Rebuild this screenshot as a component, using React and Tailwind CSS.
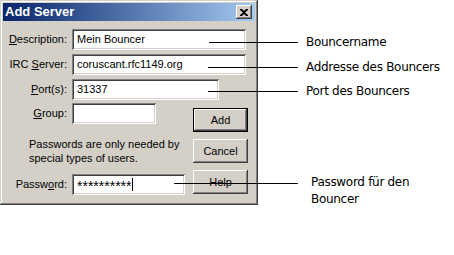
import React from "react";

const sunken =
  "bg-white shadow-[inset_1px_1px_#808080,inset_-1px_-1px_#ffffff,inset_2px_2px_#404040,inset_-2px_-2px_#d4d0c8]";
const raised =
  "bg-[#d4d0c8] shadow-[inset_-1px_-1px_#404040,inset_1px_1px_#ffffff,inset_-2px_-2px_#808080,inset_2px_2px_#d4d0c8]";
const defaultBtn =
  "bg-[#d4d0c8] shadow-[inset_0_0_0_1px_#000000,inset_-2px_-2px_#404040,inset_2px_2px_#ffffff,inset_-3px_-3px_#808080]";

function Field({ label, accessIndex, value, width, className = "" }) {
  const before = label.slice(0, accessIndex);
  const key = label.charAt(accessIndex);
  const after = label.slice(accessIndex + 1);
  return (
    <div className={`flex items-center h-[21px] ${className}`}>
      <div className="w-[65px] text-right pr-[1px]">
        {before}
        <span className="underline underline-offset-1">{key}</span>
        {after}
      </div>
      <div
        className={`${sunken} ml-[4px] h-[21px] px-[5px] flex items-center ${width}`}
      >
        {value}
      </div>
    </div>
  );
}

function Button({ children, primary, className = "" }) {
  return (
    <div
      className={`${primary ? defaultBtn : raised} w-[55px] h-[24px] flex items-center justify-center ${className}`}
    >
      {children}
    </div>
  );
}

function Callout({ top, lineLeft, textLeft, children }) {
  return (
    <div className="absolute left-0 right-0" style={{ top }}>
      <div
        className="absolute h-px bg-black"
        style={{ left: lineLeft, width: 298 - lineLeft }}
      />
      <div
        className="absolute -translate-y-1/2 text-[12px] leading-[17px] font-['DejaVu_Sans',sans-serif] tracking-[-0.3px] text-black"
        style={{ left: textLeft }}
      >
        {children}
      </div>
    </div>
  );
}

export default function App() {
  return (
    <div className="relative w-[454px] h-[255px] bg-white font-['Liberation_Sans',sans-serif] text-[11px] text-black overflow-hidden">
      <div className="w-[258px] h-[205px] bg-[#d4d0c8] p-[3px] shadow-[inset_-1px_-1px_#404040,inset_1px_1px_#d4d0c8,inset_-2px_-2px_#808080,inset_2px_2px_#ffffff]">
        <div className="h-[18px] flex items-center justify-between pl-[2px] pr-[3px] bg-gradient-to-r from-[#0a246a] to-[#a6caf0]">
          <span className="text-white font-bold text-[13px]">Add Server</span>
          <div className={`${raised} w-[16px] h-[14px] flex items-center justify-center`}>
            <svg width="8" height="7" viewBox="0 0 8 7">
              <path
                d="M0 0h2l2 2 2-2h2v1L5 3.5 8 6v1H6L4 5 2 7H0V6l3-2.5L0 1z"
                fill="#000"
              />
            </svg>
          </div>
        </div>

        <div className="pt-[8px]">
          <Field label="Description:" accessIndex={0} value="Mein Bouncer" width="w-[174px]" />
          <Field label="IRC Server:" accessIndex={4} value="coruscant.rfc1149.org" width="w-[174px]" className="mt-[4px]" />
          <Field label="Port(s):" accessIndex={0} value="31337" width="w-[147px]" className="mt-[4px]" />

          <div className="flex">
            <div className="w-[187px]">
              <Field label="Group:" accessIndex={0} value="" width="w-[84px]" className="mt-[3px]" />
              <div className="pl-[26px] mt-[13px] leading-[14px]">
                <div>Passwords are only needed by</div>
                <div>special types of users.</div>
              </div>
              <Field
                label="Password:"
                accessIndex={5}
                value={
                  <span className="flex items-center">
                    <span className="text-[14px] leading-[14px] pt-[3px]">**********</span>
                    <span className="w-px h-[13px] bg-black ml-[1px]" />
                  </span>
                }
                width="w-[113px]"
                className="mt-[9px]"
              />
            </div>
            <div className="ml-[3px] mt-[8px] flex flex-col">
              <Button primary>Add</Button>
              <Button className="mt-[7px]">Cancel</Button>
              <Button className="mt-[7px]">Help</Button>
            </div>
          </div>
        </div>
      </div>

      <Callout top={42} lineLeft={209} textLeft={306}>Bouncername</Callout>
      <Callout top={67} lineLeft={208} textLeft={306}>Addresse des Bouncers</Callout>
      <Callout top={91} lineLeft={208} textLeft={306}>Port des Bouncers</Callout>
      <div className="absolute left-0 right-0" style={{ top: 183 }}>
        <div className="absolute h-px bg-black" style={{ left: 174, width: 124 }} />
        <div className="absolute top-[-9px] left-[311px] text-[12px] leading-[17px] font-['DejaVu_Sans',sans-serif] tracking-[-0.3px]">
          <div>Password für den</div>
          <div>Bouncer</div>
        </div>
      </div>
    </div>
  );
}
